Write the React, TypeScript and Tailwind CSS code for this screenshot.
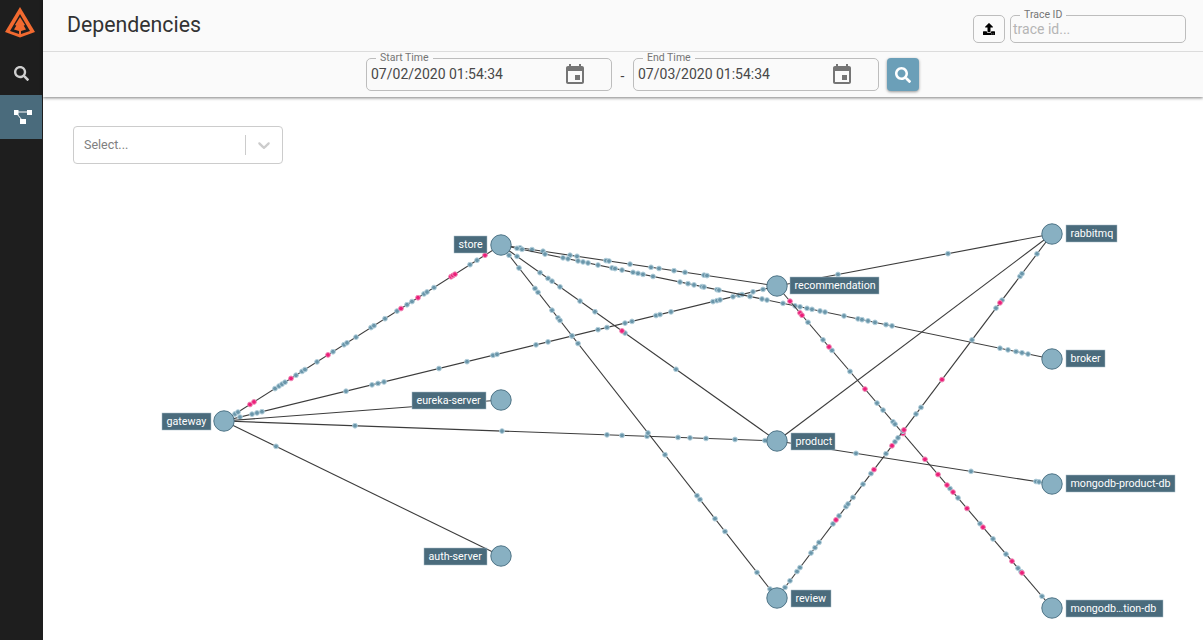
import { FaSearch, FaUpload } from "react-icons/fa";

type Pt = [number, number];

const nodes: Record<string, Pt> = {
  gateway: [224, 421],
  store: [501, 245],
  eureka: [501, 400],
  auth: [501, 556],
  recommendation: [777, 286],
  product: [777, 441],
  review: [777, 598],
  rabbitmq: [1052, 234],
  broker: [1052, 359],
  mongoProduct: [1052, 484],
  mongoRec: [1052, 608],
};

// blue / pink hold the x position of each dot along the edge
const edges: { from: string; to: string; blue: number[]; pink: number[] }[] = [
  {
    from: "gateway",
    to: "store",
    blue: [235, 238, 275, 279, 282, 285, 296, 302, 305, 317, 333, 344, 347, 356, 371, 374, 385, 397, 407, 412, 424, 427, 434, 470, 477],
    pink: [250, 254, 291, 328, 401, 418, 451, 453, 455, 485],
  },
  {
    from: "gateway",
    to: "recommendation",
    blue: [240, 252, 257, 262, 346, 372, 378, 384, 439, 467, 493, 497, 536, 548, 572, 598, 607, 625, 632, 656, 660, 671, 713, 717, 720, 733, 739, 742, 753, 763],
    pink: [],
  },
  { from: "gateway", to: "eureka", blue: [], pink: [] },
  { from: "gateway", to: "product", blue: [355, 502, 607, 622, 647, 678, 690, 706, 735, 765], pink: [] },
  { from: "gateway", to: "auth", blue: [276], pink: [] },
  {
    from: "store",
    to: "recommendation",
    blue: [520, 532, 543, 570, 577, 606, 609, 630, 651, 659, 674, 685, 704, 707],
    pink: [],
  },
  {
    from: "store",
    to: "broker",
    blue: [517, 522, 545, 563, 568, 578, 583, 588, 598, 612, 615, 622, 633, 638, 643, 653, 680, 688, 694, 702, 704, 717, 719, 750, 762, 767, 783, 795, 800, 807, 812, 820, 825, 844, 858, 862, 868, 875, 886, 892, 1000, 1008, 1016, 1022, 1028],
    pink: [],
  },
  {
    from: "store",
    to: "product",
    blue: [517, 540, 548, 552, 560, 580, 595, 625, 676],
    pink: [622],
  },
  {
    from: "store",
    to: "review",
    blue: [509, 519, 535, 538, 552, 558, 560, 572, 578, 648, 665, 697, 700, 715, 725, 757, 770],
    pink: [],
  },
  { from: "recommendation", to: "rabbitmq", blue: [838, 948], pink: [] },
  {
    from: "recommendation",
    to: "mongoRec",
    blue: [808, 823, 832, 850, 877, 883, 893, 895, 950, 958, 980, 993, 1006, 1018, 1021, 1042],
    pink: [790, 800, 802, 829, 865, 903, 925, 938, 947, 953, 967, 983, 1012, 1022],
  },
  { from: "product", to: "rabbitmq", blue: [], pink: [] },
  { from: "product", to: "mongoProduct", blue: [856, 971, 1036, 1039], pink: [] },
  {
    from: "review",
    to: "rabbitmq",
    blue: [785, 790, 797, 800, 811, 815, 819, 833, 839, 846, 848, 853, 863, 871, 886, 895, 898, 903, 916, 921, 972, 996, 1002, 1020, 1022, 1037],
    pink: [836, 874, 892, 904, 942, 1000],
  },
];

const labels: { text: string; x: number; y: number; w: number }[] = [
  { text: "gateway", x: 162, y: 413, w: 49 },
  { text: "store", x: 454, y: 236, w: 33 },
  { text: "eureka-server", x: 412, y: 392, w: 74 },
  { text: "auth-server", x: 424, y: 548, w: 63 },
  { text: "recommendation", x: 790, y: 277, w: 89 },
  { text: "product", x: 791, y: 433, w: 44 },
  { text: "review", x: 791, y: 590, w: 40 },
  { text: "rabbitmq", x: 1066, y: 225, w: 51 },
  { text: "broker", x: 1066, y: 350, w: 39 },
  { text: "mongodb-product-db", x: 1066, y: 475, w: 109 },
  { text: "mongodb…tion-db", x: 1066, y: 600, w: 97 },
];

const yOnEdge = (a: Pt, b: Pt, x: number) => a[1] + ((b[1] - a[1]) * (x - a[0])) / (b[0] - a[0]);

const CalendarIcon = () => (
  <svg viewBox="0 0 24 24" className="h-6 w-6 fill-[#757575]">
    <path d="M17 12h-5v5h5v-5zM16 1v2H8V1H6v2H5c-1.11 0-1.99.9-1.99 2L3 19c0 1.1.89 2 2 2h14c1.1 0 2-.9 2-2V5c0-1.1-.9-2-2-2h-1V1h-2zm3 18H5V8h14v11z" />
  </svg>
);

const Logo = () => (
  <svg viewBox="0 0 30 31" className="h-[31px] w-[30px]">
    <path fill="#f26a30" d="M15 0 L30 25 L15 30.5 L0 25 Z" />
    <path fill="#1e1e1e" d="M15 7 L5 24 L14 27 L14 24 L9 22.5 L15 12.5 L21 22.5 L16 24 L16 27 L25 24 Z" />
    <path fill="#f26a30" d="M15 10 L20 18 L18 19 L16 16.5 L16 30 L14 30 L14 16.5 L12 19 L10 18 Z" />
  </svg>
);

const DateField = ({ label, value }: { label: string; value: string }) => (
  <div className="relative flex h-[33px] w-[246px] items-center justify-between rounded-[5px] border border-[#bdbdbd] pl-1 pr-6">
    <span className="absolute -top-[7px] left-[9px] bg-[#fafafa] px-1 text-[10.5px] leading-[12px] text-[#757575]">
      {label}
    </span>
    <span className="text-[14px] text-[#484848]">{value}</span>
    <CalendarIcon />
  </div>
);

const Graph = () => (
  <svg viewBox="43 0 1160 640" className="absolute left-0 top-0 h-[640px] w-[1160px]">
    {edges.map((e) => {
      const a = nodes[e.from];
      const b = nodes[e.to];
      return (
        <g key={e.from + e.to}>
          <line x1={a[0]} y1={a[1]} x2={b[0]} y2={b[1]} stroke="#3c3c3c" strokeWidth={1.1} />
          {e.blue.map((x) => (
            <circle key={x} cx={x} cy={yOnEdge(a, b, x)} r={2.4} fill="#6a96aa" stroke="#b4d0dc" strokeWidth={1} />
          ))}
          {e.pink.map((x) => (
            <circle key={x} cx={x} cy={yOnEdge(a, b, x)} r={2.4} fill="#ec1e79" stroke="#f08cb8" strokeWidth={1} />
          ))}
        </g>
      );
    })}
    {Object.entries(nodes).map(([name, p]) => (
      <circle key={name} cx={p[0]} cy={p[1]} r={10.2} fill="#88b0c2" stroke="#4d7386" strokeWidth={1} />
    ))}
    {labels.map((l) => (
      <g key={l.text}>
        <rect x={l.x} y={l.y} width={l.w} height={17} fill="#4a6b7c" stroke="#a7bcc6" strokeWidth={0.5} />
        <text x={l.x + 4.5} y={l.y + 12} fill="#ffffff" className="text-[10.7px]">
          {l.text}
        </text>
      </g>
    ))}
  </svg>
);

export default function App() {
  return (
    <div className="flex h-[640px] w-[1203px] overflow-hidden bg-white font-['Roboto',sans-serif]">
      <aside className="flex w-[43px] shrink-0 flex-col bg-[#1e1e1e]">
        <div className="flex h-[51px] items-start pl-[5px] pt-[7px]">
          <Logo />
        </div>
        <div className="flex h-11 items-center justify-center pr-[1px]">
          <FaSearch className="h-[15px] w-[15px] text-[#cfcfcf]" />
        </div>
        <div className="flex h-11 w-[42px] items-center justify-center bg-[#4a6b7c]">
          <svg viewBox="0 0 22 16" className="h-4 w-[22px] fill-white stroke-white">
            <rect x="4" y="1" width="4.5" height="5" strokeWidth="0" />
            <rect x="17" y="1" width="5" height="5" strokeWidth="0" />
            <rect x="10" y="10" width="6" height="5" strokeWidth="0" />
            <path d="M7 3 H18 M7 5 L12 11" strokeWidth="1" fill="none" />
          </svg>
        </div>
      </aside>

      <main className="relative flex min-w-0 flex-1 flex-col">
        <Graph />
        <header className="relative z-10 bg-[#fafafa] shadow-[0_1px_3px_rgba(0,0,0,0.5)]">
          <div className="flex h-[52px] items-start justify-between border-b border-[#dcdcdc] pl-6 pr-[17px]">
            <h1 className="pt-[11px] text-[21.3px] leading-[27px] text-[#333333]">Dependencies</h1>
            <div className="flex gap-[5px] pt-[15px]">
              <button className="flex h-[28px] w-[32px] items-center justify-center rounded-[5px] border border-[#bdbdbd]">
                <FaUpload className="h-[12px] w-[12px] text-black" />
              </button>
              <div className="relative flex h-[28px] w-[176px] items-center rounded-[5px] border border-[#bdbdbd] px-[2px]">
                <span className="absolute -top-[7px] left-[9px] bg-[#fafafa] px-1 text-[10.5px] leading-[12px] text-[#757575]">
                  Trace ID
                </span>
                <span className="text-[14px] text-[#b5b5b5]">trace id...</span>
              </div>
            </div>
          </div>
          <div className="flex h-[45px] items-start pl-[323px] pt-[6px]">
            <DateField label="Start Time" value="07/02/2020 01:54:34" />
            <span className="w-[21px] pt-2 text-center text-[14px] text-[#424242]">-</span>
            <DateField label="End Time" value="07/03/2020 01:54:34" />
            <button className="ml-2 flex h-[33px] w-[32px] items-center justify-center rounded-[4px] bg-[#6b9fb8] shadow-[0_1px_3px_rgba(0,0,0,0.4)]">
              <FaSearch className="h-[16px] w-[16px] text-white" />
            </button>
          </div>
        </header>

        <div className="relative ml-[30px] mt-[29px] flex h-[38px] w-[210px] items-center rounded-[4px] border border-[#cccccc] bg-white">
          <span className="flex-1 pl-[10px] text-[12.5px] text-[#808080]">Select...</span>
          <span className="h-5 w-px bg-[#cccccc]" />
          <svg viewBox="0 0 20 20" className="ml-[8px] mr-[8px] h-5 w-5 fill-[#cccccc]">
            <path d="M4.516 7.548c.436-.446 1.043-.481 1.576 0L10 11.295l3.908-3.747c.533-.481 1.141-.446 1.574 0 .436.445.408 1.197 0 1.615-.406.418-4.695 4.502-4.695 4.502a1.095 1.095 0 0 1-1.576 0S4.924 9.581 4.516 9.163c-.409-.418-.436-1.17 0-1.615z" />
          </svg>
        </div>
      </main>
    </div>
  );
}
